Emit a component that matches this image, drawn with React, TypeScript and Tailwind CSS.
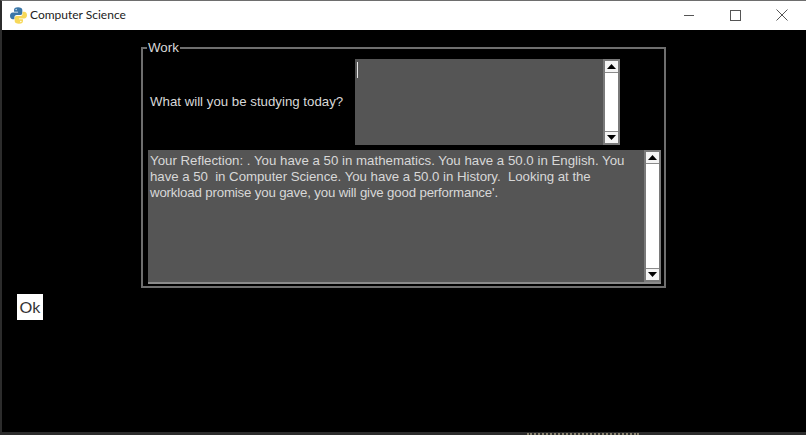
import React from "react";

function Arrow({ up }: { up: boolean }) {
  return (
    <div className={`h-[12px] w-full flex items-center justify-center bg-[#f4f4f4] ${up ? "border-b border-b-[#8a8a8a]" : "border-t border-t-[#8a8a8a]"}`}>
      <svg width="9" height="5" viewBox="0 0 9 5">
        <path d={up ? "M4.5 0L9 5H0Z" : "M0 0H9L4.5 5Z"} fill="#000" />
      </svg>
    </div>
  );
}

function ScrollBar() {
  return (
    <div className="w-[17px] shrink-0 flex flex-col bg-white border-2 border-[#7a7a7a]">
      <Arrow up />
      <div className="flex-1 bg-white" />
      <Arrow up={false} />
    </div>
  );
}

function PythonLogo() {
  return (
    <svg width="17" height="17" viewBox="0 0 16 16">
      <path d="M7.6 0.3C4.6 0.3 3.8 1.6 3.8 2.9V4.4H7.6V5.2H2.6C1 5.2 0 6.5 0 8.3C0 10.2 1 11.6 2.6 11.6H4.2V9.5C4.2 8.3 5.2 7.6 6.4 7.6H9.8C10.9 7.6 11.6 6.8 11.6 5.7V2.8C11.6 1.2 10 0.3 7.6 0.3Z" fill="#3a76a8" />
      <circle cx="5.8" cy="2.4" r="0.7" fill="#cfe0ee" />
      <path d="M8.4 15.7C11.4 15.7 12.2 14.4 12.2 13.1V11.6H8.4V10.8H13.4C15 10.8 16 9.5 16 7.7C16 5.8 15 4.4 13.4 4.4H11.8V6.5C11.8 7.7 10.8 8.4 9.6 8.4H6.2C5.1 8.4 4.4 9.2 4.4 10.3V13.2C4.4 14.8 6 15.7 8.4 15.7Z" fill="#f7d858" />
      <circle cx="10.2" cy="13.6" r="0.7" fill="#fff" />
    </svg>
  );
}

export default function App() {
  return (
    <div
      className="w-[806px] h-[435px] overflow-hidden flex flex-col bg-black border-t border-t-[#6e6e6e] border-l-2 border-l-[#2c2c2c]"
      style={{ fontFamily: '"Liberation Sans", Arial, sans-serif' }}
    >
      <div className="h-[29px] shrink-0 bg-white flex items-center pl-[8px] text-[#222]">
        <PythonLogo />
        <span className="ml-[3px] mb-[2px] text-[12px]" style={{ fontFamily: 'Lato, sans-serif' }}>
          Computer Science
        </span>
        <div className="ml-auto flex items-center h-full pb-[1px]">
          <div className="w-[46px] h-full flex items-center justify-center">
            <div className="w-[10px] h-px bg-[#555]" />
          </div>
          <div className="w-[46px] h-full flex items-center justify-center">
            <div className="w-[11px] h-[11px] border border-[#555]" />
          </div>
          <div className="w-[48px] h-full flex items-center justify-center">
            <svg width="12" height="12" viewBox="0 0 12 12">
              <path d="M0.5 0.5L11.5 11.5M11.5 0.5L0.5 11.5" stroke="#555" strokeWidth="1" fill="none" />
            </svg>
          </div>
        </div>
      </div>

      <div className="flex-1 flex flex-col text-[13.27px] leading-[16px] text-[#d8d8d8]">
        <fieldset className="ml-[139px] mt-[10px] w-[525px] h-[248px] border-2 border-[#6e6e6e] pl-[5px] pr-[3px] pt-0 pb-[2px] flex flex-col">
          <legend className="-ml-px px-px text-[13.33px] leading-[16px]">Work</legend>
          <div className="flex items-center h-[86px] mt-[3px]">
            <span className="ml-[2px] w-[205px] shrink-0">What will you be studying today?</span>
            <div className="w-[265px] h-full flex bg-[#555]">
              <div className="flex-1 relative">
                <div className="absolute left-[2px] top-[3px] w-px h-[16px] bg-[#e8e8e8]" />
              </div>
              <ScrollBar />
            </div>
          </div>
          <div className="flex h-[134px] mt-[5px] border-b-2 border-[#8a8a8a] bg-[#555]">
            <div className="flex-1 px-[2px] pt-[3px] whitespace-nowrap">
              <div>Your Reflection: . You have a 50 in mathematics. You have a 50.0 in English. You</div>
              <div className="tracking-[-0.04px]">have a 50&nbsp; in Computer Science. You have a 50.0 in History.&nbsp; Looking at the</div>
              <div className="tracking-[-0.17px]">workload promise you gave, you will give good performance'.</div>
            </div>
            <ScrollBar />
          </div>
        </fieldset>
        <div className="ml-[15px] mt-[6px] w-[26px] h-[26px] bg-white flex items-center justify-center text-[#333] text-[16px]" style={{ fontFamily: 'Lato, sans-serif' }}>
          Ok
        </div>
      </div>
      <div className="h-[3px] shrink-0 bg-[#2c2c2c] pl-[525px] pt-px">
        <div className="w-[112px] border-t-2 border-dotted border-[#8a8470]" />
      </div>
    </div>
  );
}
